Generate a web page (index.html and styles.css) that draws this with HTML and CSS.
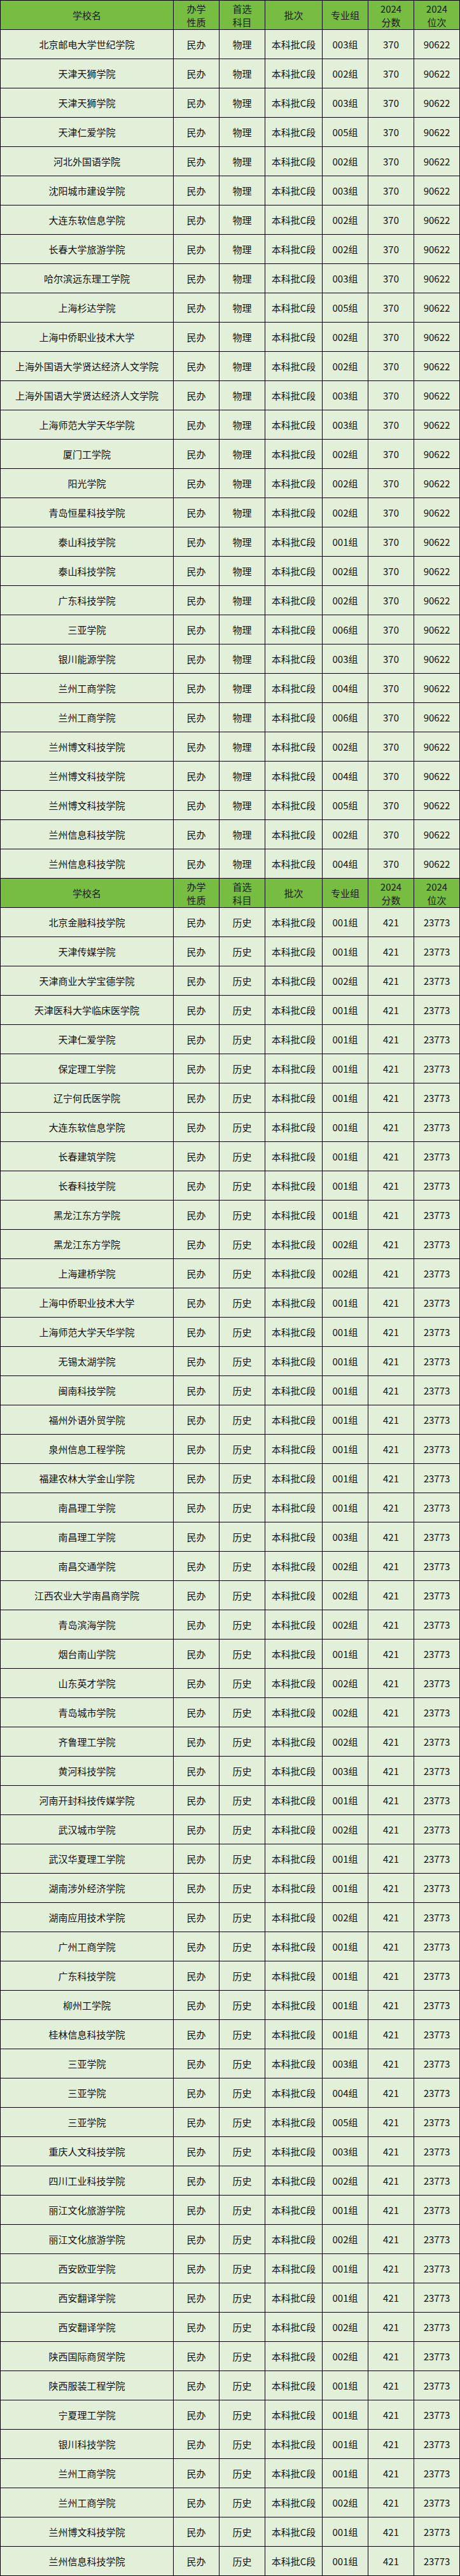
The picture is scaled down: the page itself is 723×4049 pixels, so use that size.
FILE: index.html
```html
<!DOCTYPE html>
<html lang="zh-CN">
<head>
<meta charset="utf-8">
<title>本科批C段 院校</title>
<link rel="stylesheet" href="styles.css">
</head>
<body>
<div class="sheet">
<div class="row head"><div class="c">学校名</div><div class="c">办学<br>性质</div><div class="c">首选<br>科目</div><div class="c">批次</div><div class="c">专业组</div><div class="c">2024<br>分数</div><div class="c">2024<br>位次</div></div>
<div class="row"><div class="c">北京邮电大学世纪学院</div><div class="c">民办</div><div class="c">物理</div><div class="c">本科批C段</div><div class="c">003组</div><div class="c">370</div><div class="c">90622</div></div>
<div class="row"><div class="c">天津天狮学院</div><div class="c">民办</div><div class="c">物理</div><div class="c">本科批C段</div><div class="c">002组</div><div class="c">370</div><div class="c">90622</div></div>
<div class="row"><div class="c">天津天狮学院</div><div class="c">民办</div><div class="c">物理</div><div class="c">本科批C段</div><div class="c">003组</div><div class="c">370</div><div class="c">90622</div></div>
<div class="row"><div class="c">天津仁爱学院</div><div class="c">民办</div><div class="c">物理</div><div class="c">本科批C段</div><div class="c">005组</div><div class="c">370</div><div class="c">90622</div></div>
<div class="row"><div class="c">河北外国语学院</div><div class="c">民办</div><div class="c">物理</div><div class="c">本科批C段</div><div class="c">002组</div><div class="c">370</div><div class="c">90622</div></div>
<div class="row"><div class="c">沈阳城市建设学院</div><div class="c">民办</div><div class="c">物理</div><div class="c">本科批C段</div><div class="c">003组</div><div class="c">370</div><div class="c">90622</div></div>
<div class="row"><div class="c">大连东软信息学院</div><div class="c">民办</div><div class="c">物理</div><div class="c">本科批C段</div><div class="c">002组</div><div class="c">370</div><div class="c">90622</div></div>
<div class="row"><div class="c">长春大学旅游学院</div><div class="c">民办</div><div class="c">物理</div><div class="c">本科批C段</div><div class="c">002组</div><div class="c">370</div><div class="c">90622</div></div>
<div class="row"><div class="c">哈尔滨远东理工学院</div><div class="c">民办</div><div class="c">物理</div><div class="c">本科批C段</div><div class="c">003组</div><div class="c">370</div><div class="c">90622</div></div>
<div class="row"><div class="c">上海杉达学院</div><div class="c">民办</div><div class="c">物理</div><div class="c">本科批C段</div><div class="c">005组</div><div class="c">370</div><div class="c">90622</div></div>
<div class="row"><div class="c">上海中侨职业技术大学</div><div class="c">民办</div><div class="c">物理</div><div class="c">本科批C段</div><div class="c">002组</div><div class="c">370</div><div class="c">90622</div></div>
<div class="row"><div class="c">上海外国语大学贤达经济人文学院</div><div class="c">民办</div><div class="c">物理</div><div class="c">本科批C段</div><div class="c">002组</div><div class="c">370</div><div class="c">90622</div></div>
<div class="row"><div class="c">上海外国语大学贤达经济人文学院</div><div class="c">民办</div><div class="c">物理</div><div class="c">本科批C段</div><div class="c">003组</div><div class="c">370</div><div class="c">90622</div></div>
<div class="row"><div class="c">上海师范大学天华学院</div><div class="c">民办</div><div class="c">物理</div><div class="c">本科批C段</div><div class="c">003组</div><div class="c">370</div><div class="c">90622</div></div>
<div class="row"><div class="c">厦门工学院</div><div class="c">民办</div><div class="c">物理</div><div class="c">本科批C段</div><div class="c">002组</div><div class="c">370</div><div class="c">90622</div></div>
<div class="row"><div class="c">阳光学院</div><div class="c">民办</div><div class="c">物理</div><div class="c">本科批C段</div><div class="c">002组</div><div class="c">370</div><div class="c">90622</div></div>
<div class="row"><div class="c">青岛恒星科技学院</div><div class="c">民办</div><div class="c">物理</div><div class="c">本科批C段</div><div class="c">002组</div><div class="c">370</div><div class="c">90622</div></div>
<div class="row"><div class="c">泰山科技学院</div><div class="c">民办</div><div class="c">物理</div><div class="c">本科批C段</div><div class="c">001组</div><div class="c">370</div><div class="c">90622</div></div>
<div class="row"><div class="c">泰山科技学院</div><div class="c">民办</div><div class="c">物理</div><div class="c">本科批C段</div><div class="c">002组</div><div class="c">370</div><div class="c">90622</div></div>
<div class="row"><div class="c">广东科技学院</div><div class="c">民办</div><div class="c">物理</div><div class="c">本科批C段</div><div class="c">002组</div><div class="c">370</div><div class="c">90622</div></div>
<div class="row"><div class="c">三亚学院</div><div class="c">民办</div><div class="c">物理</div><div class="c">本科批C段</div><div class="c">006组</div><div class="c">370</div><div class="c">90622</div></div>
<div class="row"><div class="c">银川能源学院</div><div class="c">民办</div><div class="c">物理</div><div class="c">本科批C段</div><div class="c">003组</div><div class="c">370</div><div class="c">90622</div></div>
<div class="row"><div class="c">兰州工商学院</div><div class="c">民办</div><div class="c">物理</div><div class="c">本科批C段</div><div class="c">004组</div><div class="c">370</div><div class="c">90622</div></div>
<div class="row"><div class="c">兰州工商学院</div><div class="c">民办</div><div class="c">物理</div><div class="c">本科批C段</div><div class="c">006组</div><div class="c">370</div><div class="c">90622</div></div>
<div class="row"><div class="c">兰州博文科技学院</div><div class="c">民办</div><div class="c">物理</div><div class="c">本科批C段</div><div class="c">002组</div><div class="c">370</div><div class="c">90622</div></div>
<div class="row"><div class="c">兰州博文科技学院</div><div class="c">民办</div><div class="c">物理</div><div class="c">本科批C段</div><div class="c">004组</div><div class="c">370</div><div class="c">90622</div></div>
<div class="row"><div class="c">兰州博文科技学院</div><div class="c">民办</div><div class="c">物理</div><div class="c">本科批C段</div><div class="c">005组</div><div class="c">370</div><div class="c">90622</div></div>
<div class="row"><div class="c">兰州信息科技学院</div><div class="c">民办</div><div class="c">物理</div><div class="c">本科批C段</div><div class="c">002组</div><div class="c">370</div><div class="c">90622</div></div>
<div class="row"><div class="c">兰州信息科技学院</div><div class="c">民办</div><div class="c">物理</div><div class="c">本科批C段</div><div class="c">004组</div><div class="c">370</div><div class="c">90622</div></div>
<div class="row head"><div class="c">学校名</div><div class="c">办学<br>性质</div><div class="c">首选<br>科目</div><div class="c">批次</div><div class="c">专业组</div><div class="c">2024<br>分数</div><div class="c">2024<br>位次</div></div>
<div class="row"><div class="c">北京金融科技学院</div><div class="c">民办</div><div class="c">历史</div><div class="c">本科批C段</div><div class="c">001组</div><div class="c">421</div><div class="c">23773</div></div>
<div class="row"><div class="c">天津传媒学院</div><div class="c">民办</div><div class="c">历史</div><div class="c">本科批C段</div><div class="c">001组</div><div class="c">421</div><div class="c">23773</div></div>
<div class="row"><div class="c">天津商业大学宝德学院</div><div class="c">民办</div><div class="c">历史</div><div class="c">本科批C段</div><div class="c">002组</div><div class="c">421</div><div class="c">23773</div></div>
<div class="row"><div class="c">天津医科大学临床医学院</div><div class="c">民办</div><div class="c">历史</div><div class="c">本科批C段</div><div class="c">001组</div><div class="c">421</div><div class="c">23773</div></div>
<div class="row"><div class="c">天津仁爱学院</div><div class="c">民办</div><div class="c">历史</div><div class="c">本科批C段</div><div class="c">001组</div><div class="c">421</div><div class="c">23773</div></div>
<div class="row"><div class="c">保定理工学院</div><div class="c">民办</div><div class="c">历史</div><div class="c">本科批C段</div><div class="c">001组</div><div class="c">421</div><div class="c">23773</div></div>
<div class="row"><div class="c">辽宁何氏医学院</div><div class="c">民办</div><div class="c">历史</div><div class="c">本科批C段</div><div class="c">001组</div><div class="c">421</div><div class="c">23773</div></div>
<div class="row"><div class="c">大连东软信息学院</div><div class="c">民办</div><div class="c">历史</div><div class="c">本科批C段</div><div class="c">001组</div><div class="c">421</div><div class="c">23773</div></div>
<div class="row"><div class="c">长春建筑学院</div><div class="c">民办</div><div class="c">历史</div><div class="c">本科批C段</div><div class="c">001组</div><div class="c">421</div><div class="c">23773</div></div>
<div class="row"><div class="c">长春科技学院</div><div class="c">民办</div><div class="c">历史</div><div class="c">本科批C段</div><div class="c">001组</div><div class="c">421</div><div class="c">23773</div></div>
<div class="row"><div class="c">黑龙江东方学院</div><div class="c">民办</div><div class="c">历史</div><div class="c">本科批C段</div><div class="c">001组</div><div class="c">421</div><div class="c">23773</div></div>
<div class="row"><div class="c">黑龙江东方学院</div><div class="c">民办</div><div class="c">历史</div><div class="c">本科批C段</div><div class="c">002组</div><div class="c">421</div><div class="c">23773</div></div>
<div class="row"><div class="c">上海建桥学院</div><div class="c">民办</div><div class="c">历史</div><div class="c">本科批C段</div><div class="c">002组</div><div class="c">421</div><div class="c">23773</div></div>
<div class="row"><div class="c">上海中侨职业技术大学</div><div class="c">民办</div><div class="c">历史</div><div class="c">本科批C段</div><div class="c">001组</div><div class="c">421</div><div class="c">23773</div></div>
<div class="row"><div class="c">上海师范大学天华学院</div><div class="c">民办</div><div class="c">历史</div><div class="c">本科批C段</div><div class="c">001组</div><div class="c">421</div><div class="c">23773</div></div>
<div class="row"><div class="c">无锡太湖学院</div><div class="c">民办</div><div class="c">历史</div><div class="c">本科批C段</div><div class="c">001组</div><div class="c">421</div><div class="c">23773</div></div>
<div class="row"><div class="c">闽南科技学院</div><div class="c">民办</div><div class="c">历史</div><div class="c">本科批C段</div><div class="c">001组</div><div class="c">421</div><div class="c">23773</div></div>
<div class="row"><div class="c">福州外语外贸学院</div><div class="c">民办</div><div class="c">历史</div><div class="c">本科批C段</div><div class="c">001组</div><div class="c">421</div><div class="c">23773</div></div>
<div class="row"><div class="c">泉州信息工程学院</div><div class="c">民办</div><div class="c">历史</div><div class="c">本科批C段</div><div class="c">001组</div><div class="c">421</div><div class="c">23773</div></div>
<div class="row"><div class="c">福建农林大学金山学院</div><div class="c">民办</div><div class="c">历史</div><div class="c">本科批C段</div><div class="c">001组</div><div class="c">421</div><div class="c">23773</div></div>
<div class="row"><div class="c">南昌理工学院</div><div class="c">民办</div><div class="c">历史</div><div class="c">本科批C段</div><div class="c">001组</div><div class="c">421</div><div class="c">23773</div></div>
<div class="row"><div class="c">南昌理工学院</div><div class="c">民办</div><div class="c">历史</div><div class="c">本科批C段</div><div class="c">003组</div><div class="c">421</div><div class="c">23773</div></div>
<div class="row"><div class="c">南昌交通学院</div><div class="c">民办</div><div class="c">历史</div><div class="c">本科批C段</div><div class="c">002组</div><div class="c">421</div><div class="c">23773</div></div>
<div class="row"><div class="c">江西农业大学南昌商学院</div><div class="c">民办</div><div class="c">历史</div><div class="c">本科批C段</div><div class="c">002组</div><div class="c">421</div><div class="c">23773</div></div>
<div class="row"><div class="c">青岛滨海学院</div><div class="c">民办</div><div class="c">历史</div><div class="c">本科批C段</div><div class="c">002组</div><div class="c">421</div><div class="c">23773</div></div>
<div class="row"><div class="c">烟台南山学院</div><div class="c">民办</div><div class="c">历史</div><div class="c">本科批C段</div><div class="c">001组</div><div class="c">421</div><div class="c">23773</div></div>
<div class="row"><div class="c">山东英才学院</div><div class="c">民办</div><div class="c">历史</div><div class="c">本科批C段</div><div class="c">002组</div><div class="c">421</div><div class="c">23773</div></div>
<div class="row"><div class="c">青岛城市学院</div><div class="c">民办</div><div class="c">历史</div><div class="c">本科批C段</div><div class="c">002组</div><div class="c">421</div><div class="c">23773</div></div>
<div class="row"><div class="c">齐鲁理工学院</div><div class="c">民办</div><div class="c">历史</div><div class="c">本科批C段</div><div class="c">002组</div><div class="c">421</div><div class="c">23773</div></div>
<div class="row"><div class="c">黄河科技学院</div><div class="c">民办</div><div class="c">历史</div><div class="c">本科批C段</div><div class="c">003组</div><div class="c">421</div><div class="c">23773</div></div>
<div class="row"><div class="c">河南开封科技传媒学院</div><div class="c">民办</div><div class="c">历史</div><div class="c">本科批C段</div><div class="c">001组</div><div class="c">421</div><div class="c">23773</div></div>
<div class="row"><div class="c">武汉城市学院</div><div class="c">民办</div><div class="c">历史</div><div class="c">本科批C段</div><div class="c">002组</div><div class="c">421</div><div class="c">23773</div></div>
<div class="row"><div class="c">武汉华夏理工学院</div><div class="c">民办</div><div class="c">历史</div><div class="c">本科批C段</div><div class="c">001组</div><div class="c">421</div><div class="c">23773</div></div>
<div class="row"><div class="c">湖南涉外经济学院</div><div class="c">民办</div><div class="c">历史</div><div class="c">本科批C段</div><div class="c">001组</div><div class="c">421</div><div class="c">23773</div></div>
<div class="row"><div class="c">湖南应用技术学院</div><div class="c">民办</div><div class="c">历史</div><div class="c">本科批C段</div><div class="c">002组</div><div class="c">421</div><div class="c">23773</div></div>
<div class="row"><div class="c">广州工商学院</div><div class="c">民办</div><div class="c">历史</div><div class="c">本科批C段</div><div class="c">001组</div><div class="c">421</div><div class="c">23773</div></div>
<div class="row"><div class="c">广东科技学院</div><div class="c">民办</div><div class="c">历史</div><div class="c">本科批C段</div><div class="c">001组</div><div class="c">421</div><div class="c">23773</div></div>
<div class="row"><div class="c">柳州工学院</div><div class="c">民办</div><div class="c">历史</div><div class="c">本科批C段</div><div class="c">001组</div><div class="c">421</div><div class="c">23773</div></div>
<div class="row"><div class="c">桂林信息科技学院</div><div class="c">民办</div><div class="c">历史</div><div class="c">本科批C段</div><div class="c">001组</div><div class="c">421</div><div class="c">23773</div></div>
<div class="row"><div class="c">三亚学院</div><div class="c">民办</div><div class="c">历史</div><div class="c">本科批C段</div><div class="c">003组</div><div class="c">421</div><div class="c">23773</div></div>
<div class="row"><div class="c">三亚学院</div><div class="c">民办</div><div class="c">历史</div><div class="c">本科批C段</div><div class="c">004组</div><div class="c">421</div><div class="c">23773</div></div>
<div class="row"><div class="c">三亚学院</div><div class="c">民办</div><div class="c">历史</div><div class="c">本科批C段</div><div class="c">005组</div><div class="c">421</div><div class="c">23773</div></div>
<div class="row"><div class="c">重庆人文科技学院</div><div class="c">民办</div><div class="c">历史</div><div class="c">本科批C段</div><div class="c">003组</div><div class="c">421</div><div class="c">23773</div></div>
<div class="row"><div class="c">四川工业科技学院</div><div class="c">民办</div><div class="c">历史</div><div class="c">本科批C段</div><div class="c">002组</div><div class="c">421</div><div class="c">23773</div></div>
<div class="row"><div class="c">丽江文化旅游学院</div><div class="c">民办</div><div class="c">历史</div><div class="c">本科批C段</div><div class="c">001组</div><div class="c">421</div><div class="c">23773</div></div>
<div class="row"><div class="c">丽江文化旅游学院</div><div class="c">民办</div><div class="c">历史</div><div class="c">本科批C段</div><div class="c">002组</div><div class="c">421</div><div class="c">23773</div></div>
<div class="row"><div class="c">西安欧亚学院</div><div class="c">民办</div><div class="c">历史</div><div class="c">本科批C段</div><div class="c">001组</div><div class="c">421</div><div class="c">23773</div></div>
<div class="row"><div class="c">西安翻译学院</div><div class="c">民办</div><div class="c">历史</div><div class="c">本科批C段</div><div class="c">001组</div><div class="c">421</div><div class="c">23773</div></div>
<div class="row"><div class="c">西安翻译学院</div><div class="c">民办</div><div class="c">历史</div><div class="c">本科批C段</div><div class="c">002组</div><div class="c">421</div><div class="c">23773</div></div>
<div class="row"><div class="c">陕西国际商贸学院</div><div class="c">民办</div><div class="c">历史</div><div class="c">本科批C段</div><div class="c">002组</div><div class="c">421</div><div class="c">23773</div></div>
<div class="row"><div class="c">陕西服装工程学院</div><div class="c">民办</div><div class="c">历史</div><div class="c">本科批C段</div><div class="c">001组</div><div class="c">421</div><div class="c">23773</div></div>
<div class="row"><div class="c">宁夏理工学院</div><div class="c">民办</div><div class="c">历史</div><div class="c">本科批C段</div><div class="c">001组</div><div class="c">421</div><div class="c">23773</div></div>
<div class="row"><div class="c">银川科技学院</div><div class="c">民办</div><div class="c">历史</div><div class="c">本科批C段</div><div class="c">001组</div><div class="c">421</div><div class="c">23773</div></div>
<div class="row"><div class="c">兰州工商学院</div><div class="c">民办</div><div class="c">历史</div><div class="c">本科批C段</div><div class="c">001组</div><div class="c">421</div><div class="c">23773</div></div>
<div class="row"><div class="c">兰州工商学院</div><div class="c">民办</div><div class="c">历史</div><div class="c">本科批C段</div><div class="c">002组</div><div class="c">421</div><div class="c">23773</div></div>
<div class="row"><div class="c">兰州博文科技学院</div><div class="c">民办</div><div class="c">历史</div><div class="c">本科批C段</div><div class="c">001组</div><div class="c">421</div><div class="c">23773</div></div>
<div class="row"><div class="c">兰州信息科技学院</div><div class="c">民办</div><div class="c">历史</div><div class="c">本科批C段</div><div class="c">001组</div><div class="c">421</div><div class="c">23773</div></div>
</div>
</body>
</html>
```

FILE: styles.css
```css
html, body {
  margin: 0;
  padding: 0;
  background: #ffffff;
}

.sheet {
  width: 723px;
  box-sizing: border-box;
  border-left: 1px solid #000;
  border-top: 1px solid #000;
  font-family: "Noto Sans CJK SC", "Noto Sans", sans-serif;
  font-size: 15px;
  color: #111;
}

.row {
  display: grid;
  grid-template-columns: 272px 72px 72px 90px 72px 72px 72px;
  background: #e3f0d9;
}

.row.head {
  background: #76bd42;
}

.c {
  box-sizing: border-box;
  height: 46px;
  border-right: 1px solid #000;
  border-bottom: 1px solid #000;
  display: flex;
  align-items: center;
  justify-content: center;
  text-align: center;
  line-height: 20px;
  white-space: nowrap;
}

.head .c {
  line-height: 21px;
  color: #1a1a1a;
}
```
